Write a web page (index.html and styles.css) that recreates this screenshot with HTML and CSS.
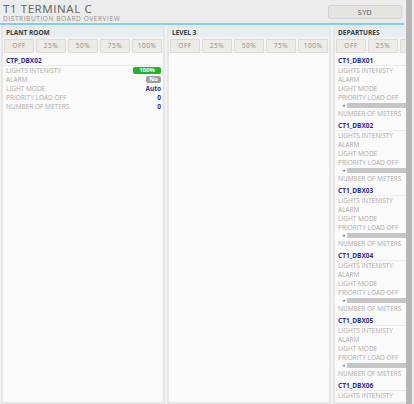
FILE: index.html
```html
<!DOCTYPE html>
<html lang="en">
<head>
<meta charset="utf-8">
<title>T1 Terminal C</title>
<link rel="stylesheet" href="styles.css">
</head>
<body>
<div class="app">
  <div class="main">
    <header class="topbar">
      <div class="titles">
        <div class="title">T1 TERMINAL C</div>
        <div class="subtitle">DISTRIBUTION BOARD OVERVIEW</div>
      </div>
      <button class="loc">SYD</button>
    </header>
    <div class="boards">
      <section class="panel">
        <div class="panel-head">PLANT ROOM</div>
        <div class="levels">
          <button class="lvl">OFF</button><button class="lvl">25%</button><button class="lvl">50%</button><button class="lvl">75%</button><button class="lvl">100%</button>
        </div>
        <div class="list">
          <div class="item">
            <div class="name">CTP_DBX02</div>
            <div class="row"><span class="lbl">LIGHTS INTENISTY</span><span class="pill pill-on">100%</span></div>
            <div class="row"><span class="lbl">ALARM</span><span class="pill pill-no">No</span></div>
            <div class="row"><span class="lbl">LIGHT MODE</span><span class="val">Auto</span></div>
            <div class="row"><span class="lbl">PRIORITY LOAD OFF</span><span class="val">0</span></div>
            <div class="row"><span class="lbl">NUMBER OF METERS</span><span class="val">0</span></div>
          </div>
        </div>
      </section>
      <section class="panel">
        <div class="panel-head">LEVEL 3</div>
        <div class="levels">
          <button class="lvl">OFF</button><button class="lvl">25%</button><button class="lvl">50%</button><button class="lvl">75%</button><button class="lvl">100%</button>
        </div>
        <div class="list"></div>
      </section>
      <section class="panel">
        <div class="panel-head">DEPARTURES</div>
        <div class="levels">
          <button class="lvl">OFF</button><button class="lvl">25%</button><button class="lvl">50%</button><button class="lvl">75%</button><button class="lvl">100%</button>
        </div>
        <div class="list">
          <div class="item">
            <div class="name">CT1_DBX01</div>
            <div class="row"><span class="lbl">LIGHTS INTENISTY</span></div>
            <div class="row"><span class="lbl">ALARM</span></div>
            <div class="row"><span class="lbl">LIGHT MODE</span></div>
            <div class="row"><span class="lbl">PRIORITY LOAD OFF</span></div>
            <div class="hscroll"><span class="arrow">&#9666;</span><span class="bar"></span></div>
            <div class="row"><span class="lbl">NUMBER OF METERS</span></div>
          </div>
          <div class="item">
            <div class="name">CT1_DBX02</div>
            <div class="row"><span class="lbl">LIGHTS INTENISTY</span></div>
            <div class="row"><span class="lbl">ALARM</span></div>
            <div class="row"><span class="lbl">LIGHT MODE</span></div>
            <div class="row"><span class="lbl">PRIORITY LOAD OFF</span></div>
            <div class="hscroll"><span class="arrow">&#9666;</span><span class="bar"></span></div>
            <div class="row"><span class="lbl">NUMBER OF METERS</span></div>
          </div>
          <div class="item">
            <div class="name">CT1_DBX03</div>
            <div class="row"><span class="lbl">LIGHTS INTENISTY</span></div>
            <div class="row"><span class="lbl">ALARM</span></div>
            <div class="row"><span class="lbl">LIGHT MODE</span></div>
            <div class="row"><span class="lbl">PRIORITY LOAD OFF</span></div>
            <div class="hscroll"><span class="arrow">&#9666;</span><span class="bar"></span></div>
            <div class="row"><span class="lbl">NUMBER OF METERS</span></div>
          </div>
          <div class="item">
            <div class="name">CT1_DBX04</div>
            <div class="row"><span class="lbl">LIGHTS INTENISTY</span></div>
            <div class="row"><span class="lbl">ALARM</span></div>
            <div class="row"><span class="lbl">LIGHT MODE</span></div>
            <div class="row"><span class="lbl">PRIORITY LOAD OFF</span></div>
            <div class="hscroll"><span class="arrow">&#9666;</span><span class="bar"></span></div>
            <div class="row"><span class="lbl">NUMBER OF METERS</span></div>
          </div>
          <div class="item">
            <div class="name">CT1_DBX05</div>
            <div class="row"><span class="lbl">LIGHTS INTENISTY</span></div>
            <div class="row"><span class="lbl">ALARM</span></div>
            <div class="row"><span class="lbl">LIGHT MODE</span></div>
            <div class="row"><span class="lbl">PRIORITY LOAD OFF</span></div>
            <div class="hscroll"><span class="arrow">&#9666;</span><span class="bar"></span></div>
            <div class="row"><span class="lbl">NUMBER OF METERS</span></div>
          </div>
          <div class="item">
            <div class="name">CT1_DBX06</div>
            <div class="row"><span class="lbl">LIGHTS INTENISTY</span></div>
            <div class="row"><span class="lbl">ALARM</span></div>
            <div class="row"><span class="lbl">LIGHT MODE</span></div>
            <div class="row"><span class="lbl">PRIORITY LOAD OFF</span></div>
            <div class="hscroll"><span class="arrow">&#9666;</span><span class="bar"></span></div>
            <div class="row"><span class="lbl">NUMBER OF METERS</span></div>
          </div>
        </div>
      </section>
    </div>
  </div>
  <div class="vscroll"><div class="vthumb"></div></div>
</div>
</body>
</html>
```

FILE: styles.css
```css
* { box-sizing: border-box; margin: 0; padding: 0; }
html, body { height: 100%; }
body {
  font-family: "Open Sans", "DejaVu Sans", sans-serif;
  background: #ededed;
  overflow: hidden;
}
.app { display: flex; width: 414px; height: 404px; }
.main {
  width: 406px;
  flex: none;
  display: flex;
  flex-direction: column;
  overflow: hidden;
}
.topbar {
  flex: none;
  height: 25px;
  margin-right: 2px;
  display: flex;
  justify-content: space-between;
  align-items: flex-start;
  padding: 2px 2px 0 3px;
  background: #ececec;
  border-bottom: 2px solid #7ccff0;
}
.title {
  font-size: 11.5px;
  line-height: 13px;
  letter-spacing: 0.6px;
  color: #606060;
}
.subtitle {
  font-size: 6.5px;
  line-height: 8px;
  letter-spacing: 0.6px;
  color: #8c8c8c;
}
.loc {
  margin-top: 3px;
  width: 74px;
  height: 14px;
  font-family: inherit;
  font-size: 7px;
  letter-spacing: 0.5px;
  color: #4a4a4a;
  background: #e4e4e0;
  border: 1px solid #d2d2d0;
  border-radius: 2px;
}
.boards {
  flex: 1;
  min-height: 0;
  display: flex;
  gap: 2px;
  padding: 1px 0 0 1px;
  background: #f3f3f3;
}
.panel {
  flex: none;
  width: 164px;
  display: flex;
  flex-direction: column;
  background: #fafafa;
  border: 2px solid #e6e6e6;
  overflow: hidden;
}
.panel-head {
  height: 9px;
  line-height: 9px;
  padding-left: 3px;
  font-size: 6.5px;
  font-weight: 700;
  color: #3a3a3a;
  background: #e8edf0;
}
.levels {
  display: grid;
  grid-template-columns: repeat(5, 1fr);
  gap: 2px;
  padding: 2px 1px 0;
  background: #f3f3f3;
}
.lvl {
  height: 13.5px;
  font-family: inherit;
  font-size: 6.5px;
  letter-spacing: 0.5px;
  color: #8a8a8a;
  background: #ecebe7;
  border: 1px solid #dcdbd6;
  border-radius: 1px;
}
.list { flex: 1; }
.item { padding-top: 4px; }
.name {
  height: 9px;
  line-height: 8px;
  padding-left: 3px;
  font-size: 6.5px;
  font-weight: 700;
  color: #2b2b96;
  border-bottom: 1px solid #ebebeb;
}
.row {
  height: 9px;
  display: flex;
  justify-content: space-between;
  align-items: center;
  padding: 0 2px 0 3px;
  font-size: 6.5px;
}
.lbl { color: #ababab; white-space: nowrap; }
.val { color: #2d2d99; font-weight: 700; }
.pill {
  height: 7px;
  line-height: 7px;
  border-radius: 2px;
  color: #fff;
  font-size: 6px;
  font-weight: 700;
  text-align: center;
}
.pill-on { width: 28px; background: #22b322; }
.pill-no { width: 15px; background: #9e9e9e; }
.hscroll {
  height: 7px;
  display: flex;
  align-items: center;
  padding-left: 5px;
  background: #fdfdfd;
}
.arrow {
  width: 7px;
  font-size: 5px;
  line-height: 7px;
  color: #777;
  text-align: center;
}
.bar { flex: 1; height: 5px; background: #c6c6c6; }
.vscroll {
  width: 8px;
  flex: none;
  padding-right: 2px;
  background: #efefef;
}
.vthumb { height: 100%; background: #b6b6b6; }
```
